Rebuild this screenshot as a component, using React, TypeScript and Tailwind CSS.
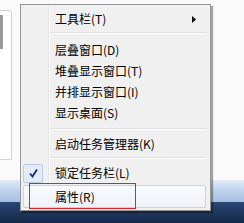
import React from 'react';

type Row =
  | { kind: 'item'; label: string; h: number; sub?: boolean; checked?: boolean; hot?: boolean }
  | { kind: 'sep'; h: number; top: number };

const rows: Row[] = [
  { kind: 'item', label: '工具栏(T)', h: 22, sub: true },
  { kind: 'sep', h: 9, top: 2 },
  { kind: 'item', label: '层叠窗口(D)', h: 21 },
  { kind: 'item', label: '堆叠显示窗口(T)', h: 21 },
  { kind: 'item', label: '并排显示窗口(I)', h: 21 },
  { kind: 'item', label: '显示桌面(S)', h: 21 },
  { kind: 'sep', h: 10, top: 5 },
  { kind: 'item', label: '启动任务管理器(K)', h: 22 },
  { kind: 'sep', h: 7, top: 2 },
  { kind: 'item', label: '锁定任务栏(L)', h: 22, checked: true },
  { kind: 'item', label: '属性(R)', h: 23, hot: true },
];

const ContextMenu: React.FC = () => {
  return (
    <div className="absolute left-[20px] top-[4px] w-[191px] h-[207px] border border-[#979797] bg-[linear-gradient(to_right,#f0f0f0_27px,#e2e3e3_27px,#e2e3e3_28px,#ffffff_28px,#ffffff_29px,#f0f0f0_29px)] shadow-[2px_2px_1px_rgba(0,0,0,0.35)]">
      <div className="flex flex-col pt-[3px] px-[2px]">
        {rows.map((row, i) =>
          row.kind === 'sep' ? (
            <div key={i} className="pl-[27px] pr-px" style={{ height: row.h, paddingTop: row.top }}>
              <div className="h-[2px] border-t border-[#e0e0e0] border-b border-b-white" />
            </div>
          ) : (
            <div
              key={i}
              className={
                'flex items-center text-[12px] text-black leading-none ' +
                (row.hot
                  ? 'mt-px mr-[2px] rounded-[2px] border border-[#c4d3e6] bg-gradient-to-b from-[#f8fafc] to-[#eef2f7]'
                  : '')
              }
              style={{ height: row.h }}
            >
              <div className="w-[20px] h-[19px] shrink-0">
                {row.checked && (
                  <div className="w-full h-full rounded-[2px] border border-[#b7cbe4] bg-[#e3ebf6] flex items-center justify-center">
                    <svg width="11" height="11" viewBox="0 0 11 11">
                      <path d="M2 5.5 L4.5 8.5 L9 1.5" fill="none" stroke="#0f2c7c" strokeWidth="1.8" />
                    </svg>
                  </div>
                )}
              </div>
              <span className={row.hot ? 'ml-[11px]' : 'ml-[12px]'}>{row.label}</span>
              {row.sub && (
                <svg className="ml-auto mr-[12px]" width="4" height="7" viewBox="0 0 4 7">
                  <path d="M0 0 L4 3.5 L0 7 Z" fill="#000" />
                </svg>
              )}
            </div>
          )
        )}
      </div>

      {/* red annotation box */}
      <div className="absolute left-[8px] top-[178px] w-[107px] h-[26px] border border-[#d8262b]" />
    </div>
  );
};

const App: React.FC = () => {
  return (
    <div className="relative w-[244px] h-[223px] overflow-hidden bg-white font-['Noto_Sans_CJK_SC','Microsoft_YaHei',sans-serif]">
      <div className="flex flex-col h-full">
        <div className="h-[180px] bg-[#fafafa] pt-[10px]">
          <div className="w-[12px] h-[150px] pt-[4px] rounded-tr-[4px] border-t border-r border-b border-[#d2d2d2] bg-white">
            <div className="w-[3px] h-[34px] bg-[#9a9a9a]" />
          </div>
        </div>
        <div className="h-[22px] bg-gradient-to-b from-[#e3ecf8] via-[#bcd1ec] to-[#a6c0e2]" />
        <div className="flex-1 bg-gradient-to-b from-[#2a4874] to-[#132848]" />
      </div>
      <ContextMenu />
    </div>
  );
};

export default App;
